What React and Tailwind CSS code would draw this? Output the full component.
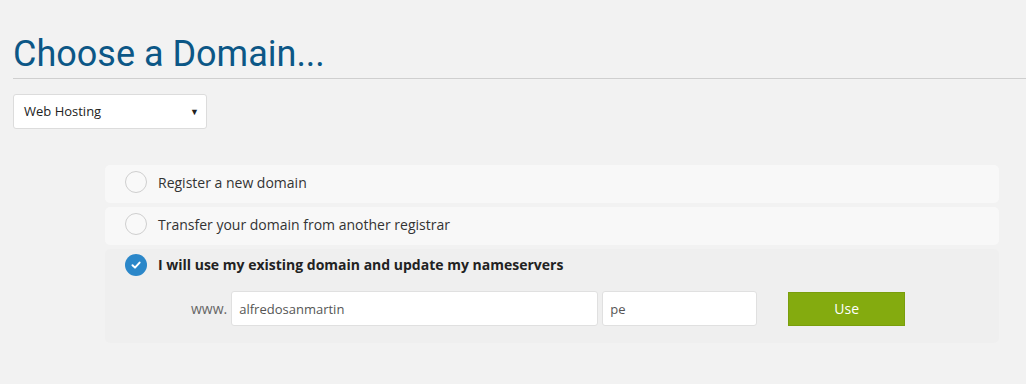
import { useState } from "react";

function Radio({ checked }) {
  if (checked) {
    return (
      <span className="flex h-[22px] w-[22px] shrink-0 items-center justify-center rounded-full bg-[#2b87c9]">
        <svg width="12" height="12" viewBox="0 0 12 12">
          <path
            d="M2.5 6.2 L5 8.6 L9.6 3.6"
            fill="none"
            stroke="#fff"
            strokeWidth="2"
            strokeLinecap="round"
            strokeLinejoin="round"
          />
        </svg>
      </span>
    );
  }
  return (
    <span className="h-[22px] w-[22px] shrink-0 rounded-full border border-[#cfcfcf] bg-[#f9f9f9]" />
  );
}

function App() {
  const [domain, setDomain] = useState("alfredosanmartin");
  const [tld, setTld] = useState("pe");

  return (
    <div className="min-h-[384px] bg-[#f2f2f2] font-['Open_Sans',sans-serif] text-[#333]">
      <div className="pl-[13px] pt-[31px]">
        <h1 className="font-['Roboto',sans-serif] text-[36px] leading-[46px] text-[#0c5786]">
          Choose a Domain...
        </h1>
        <div className="mt-[1px] h-px bg-[#cfcfcf]" />

        <div className="mt-[15px] flex h-[35px] w-[194px] items-center justify-between rounded-[3px] border border-[#dcdcdc] bg-white pl-[10px] pr-[7px] text-[13px] text-[#222]">
          <span>Web Hosting</span>
          <span className="text-[9px]">▼</span>
        </div>
      </div>

      <div className="ml-[105px] mt-[36px] flex w-[894px] flex-col gap-[4px]">
        <div className="flex h-[38px] items-center gap-[11px] rounded-[5px] bg-[#f8f8f8] pb-[4px] pl-[20px] text-[14px]">
          <Radio />
          <span>Register a new domain</span>
        </div>
        <div className="flex h-[38px] items-center gap-[11px] rounded-[5px] bg-[#f8f8f8] pb-[4px] pl-[20px] text-[14px]">
          <Radio />
          <span>Transfer your domain from another registrar</span>
        </div>
        <div className="h-[94px] rounded-[5px] bg-[#efefef] pl-[20px] pt-[4px]">
          <div className="flex h-[23px] items-center gap-[11px] text-[14px] font-bold text-[#222]">
            <Radio checked />
            <span>I will use my existing domain and update my nameservers</span>
          </div>
          <div className="mt-[15px] flex items-center pl-[66px]">
            <span className="mr-[4px] text-[14px] text-[#666]">www.</span>
            <input
              value={domain}
              onChange={(e) => setDomain(e.target.value)}
              className="h-[35px] w-[367px] rounded-[3px] border border-[#e0e0e0] bg-white px-[7px] text-[13px] text-[#555] outline-none"
            />
            <input
              value={tld}
              onChange={(e) => setTld(e.target.value)}
              className="ml-[4px] h-[35px] w-[155px] rounded-[3px] border border-[#e0e0e0] bg-white px-[7px] text-[13px] text-[#555] outline-none"
            />
            <button className="ml-[31px] h-[34px] w-[117px] border border-[#7a9e0c] bg-[#84ab0f] text-[14px] text-white">
              Use
            </button>
          </div>
        </div>
      </div>
    </div>
  );
}

export default App;
